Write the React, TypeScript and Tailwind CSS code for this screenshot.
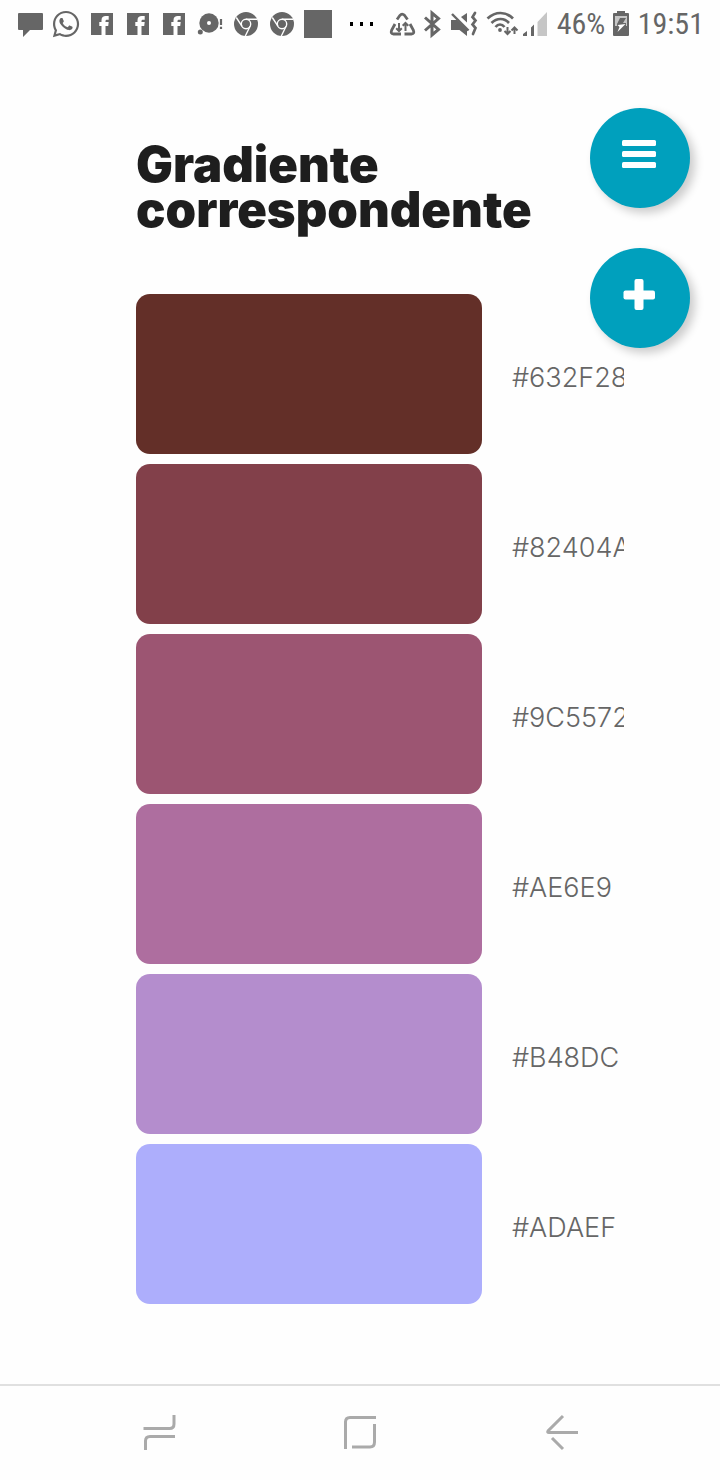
import type { ReactNode } from "react";
import { FaWhatsapp } from "react-icons/fa";

const swatches = [
  { code: "#632F28", color: "bg-[#632f28]" },
  { code: "#82404A", color: "bg-[#82404a]" },
  { code: "#9C5572", color: "bg-[#9c5572]" },
  { code: "#AE6E9", color: "bg-[#ae6e9f]" },
  { code: "#B48DC", color: "bg-[#b48dcd]" },
  { code: "#ADAEF", color: "bg-[#adaefc]" },
];

function Cell({ children }: { children: ReactNode }) {
  return (
    <svg viewBox="0 0 36 48" className="h-12 w-9 shrink-0" fill="currentColor" aria-hidden="true">
      {children}
    </svg>
  );
}

function Facebook() {
  return (
    <Cell>
      <path d="M7 13h22v22H7z" />
      <path
        fill="#fff"
        d="M17.5 35V26h-2.200v-4h2.200v-1.800c0-3 1.800-4.200 4.200-4.200h3v3.800h-1.600c-1.300 0-1.600.6-1.600 1.400v.8h3.200l-.5 4h-2.700v9z"
      />
    </Cell>
  );
}

function Chrome() {
  return (
    <Cell>
      <circle cx="18" cy="24" r="12" />
      <g fill="none" stroke="#fff" strokeWidth="1.4">
        <circle cx="18" cy="24" r="4.7" />
        <path d="M18 19.3H29M13.9 26.2 8.3 17.5M22.1 26.3 17.3 36" />
      </g>
    </Cell>
  );
}

function StatusBar() {
  return (
    <header className="flex h-12 items-center justify-between pl-3 pr-4 text-[#666]">
      <div className="flex items-center">
        <Cell>
          <path d="M7 13h23a1 1 0 0 1 1 1v15a1 1 0 0 1-1 1H18l-7 7v-7H7a1 1 0 0 1-1-1V14a1 1 0 0 1 1-1z" />
        </Cell>
        <span className="flex w-9 justify-center">
          <FaWhatsapp size={30} aria-hidden="true" />
        </span>
        <Facebook />
        <Facebook />
        <Facebook />
        <Cell>
          <circle cx="17" cy="23" r="9.7" />
          <circle cx="8.3" cy="32" r="2.5" />
          <circle cx="17" cy="23" r="2" fill="#fff" />
          <path d="M27.9 19h2.2v6h-2.2zM27.9 26.7h2.2v2.2h-2.2z" />
        </Cell>
        <Chrome />
        <Chrome />
        <Cell>
          <path d="M4 10h28v28H4z" />
        </Cell>
        <svg viewBox="0 0 48 48" className="h-12 w-12" fill="#000" aria-hidden="true">
          <path d="M14 22h3v4h-3zM24 22h3v4h-3zM34 22h3v4h-3z" />
        </svg>
      </div>
      <div className="flex items-center">
        <svg viewBox="386 0 166 48" className="h-12 w-[166px]" fill="none" stroke="currentColor" aria-hidden="true">
          <path d="m397 19.500 3-4.200q2-2.500 4.500 0l3 4.200M395 24l-3.300 6q-1.500 4 1.800 4h7.500M410 24l3.300 6q1.500 4-1.800 4h-7" strokeWidth="2.800" />
          <path d="M399 23v8m-2.800-2.800 2.800 2.800 2.800-2.800M405.500 31v-8m-2.800 2.800 2.800-2.800 2.800 2.800" strokeWidth="2" />
          <path d="m425 17.500 13.500 12-6.500 5.500V13l6.500 5.500L425 30.500" strokeWidth="3" />
          <path fill="currentColor" stroke="none" d="M451 20h6l10 9.500V36l-7.500-6H451zM461 17l6-4v9.500z" />
          <path d="m452 14 16.500 16.500" strokeWidth="2.400" />
          <path d="m475 13-2.500 4 3 3.500-3 4 3 3.500-2.500 6" strokeWidth="2.700" strokeLinecap="round" />
          <g strokeWidth="2.700">
            <path d="M487.500 18.500q6-5.500 13-5.500t12.500 5.500M491.500 23q4-4 9-4t8.500 4M495.500 27q2-2.500 4.500-2.500t4.500 2.500" />
          </g>
          <circle cx="500" cy="30" r="1.900" fill="currentColor" stroke="none" />
          <path d="M507.500 27v7m-3-3 3 3 3-3M514.500 34v-6.500m-3 3 3-3 3 3" strokeWidth="2" />
          <path fill="currentColor" stroke="none" d="M523 36v-2l4-3v5zM531 36V27.500l3-3V36z" />
          <path fill="#c6c6c6" stroke="none" d="M537.500 36V22l9.500-10v24z" />
        </svg>
        <span className="w-[58px] text-center font-['Roboto_Condensed','Liberation_Sans_Narrow',sans-serif] text-[30px] leading-[50px]">46%</span>
        <svg viewBox="0 0 24 48" className="h-12 w-6" fill="currentColor" aria-hidden="true">
          <path d="M3 13h4v-2h8v2h3a1 1 0 0 1 1 1v21a1 1 0 0 1-1 1H4a1 1 0 0 1-1-1V14a1 1 0 0 1 1-1z" />
          <path fill="#c6c6c6" d="M5 16h12v10H5z" />
          <path d="M10 18h6l-3 5h3v3H7v-2z" />
          <path fill="#fff" d="m7.500 25 8-1-8 8 2-5z" />
        </svg>
        <time className="w-[70px] text-right font-['Roboto_Condensed','Liberation_Sans_Narrow',sans-serif] text-[30px] leading-[50px]">19:51</time>
      </div>
    </header>
  );
}

function FloatingButton({ label, children }: { label: string; children: ReactNode }) {
  return (
    <button
      type="button"
      aria-label={label}
      className="flex size-[100px] justify-center rounded-full bg-[#00a0bd] pt-7 text-white shadow-[5px_5px_10px_rgba(0,0,0,0.2)]"
    >
      {children}
    </button>
  );
}

export default function App() {
  return (
    <div className="relative flex min-h-screen flex-col bg-[#fefefe] font-['Inter',sans-serif]">
      <StatusBar />

      <div className="absolute right-[30px] top-[108px] flex flex-col gap-10">
        <FloatingButton label="Menu">
          <svg viewBox="0 0 36 36" className="size-9" fill="currentColor" aria-hidden="true">
            <rect x="0" y="4" width="34" height="6" rx="1.500" />
            <rect x="0" y="15" width="34" height="6" rx="1.500" />
            <rect x="0" y="26" width="34" height="6" rx="1.500" />
          </svg>
        </FloatingButton>
        <FloatingButton label="Adicionar">
          <svg viewBox="0 0 36 36" className="size-9" fill="currentColor" aria-hidden="true">
            <rect x="1.500" y="14.500" width="31.500" height="9" rx="2" />
            <rect x="12.500" y="3" width="9" height="31" rx="2" />
          </svg>
        </FloatingButton>
      </div>

      <main className="flex-1 pb-20 pl-[136px] pr-24 pt-[94px]">
        <h1 className="text-[49px] font-black leading-[45px] text-[#1e1e1e]">Gradiente correspondente</h1>
        <ul className="mt-[62px] flex flex-col gap-[10px]">
          {swatches.map(({ code, color }) => (
            <li key={code} className="flex items-center gap-[30px]">
              <div className={`h-40 flex-1 rounded-[14px] ${color}`} />
              <input
                readOnly
                aria-label="Código da cor"
                value={code}
                className="mt-2 h-10 w-28 bg-transparent text-[27px] font-light text-[#666] outline-none"
              />
            </li>
          ))}
        </ul>
      </main>

      <nav className="flex h-24 items-center justify-center gap-[165px] border-t-2 border-[#e0e0e0] text-[#aaa]">
        <button type="button" aria-label="Recentes">
          <svg viewBox="0 0 36 36" className="size-9 overflow-visible" fill="none" stroke="currentColor" strokeWidth="3" aria-hidden="true">
            <path d="M2.500 13.500h26q4.500 0 4.500-4.500V0M34 21.500H9q-4.500 0-4.500 4.500v9" />
          </svg>
        </button>
        <button type="button" aria-label="Início">
          <svg viewBox="0 0 36 36" className="size-9" fill="none" stroke="currentColor" strokeWidth="3" aria-hidden="true">
            <path d="M3.500 34V7q0-4.500 4.500-4.500h26M32.500 9v18q0 5-4.500 5H10" />
          </svg>
        </button>
        <button type="button" aria-label="Voltar">
          <svg viewBox="0 0 36 36" className="size-9 overflow-visible" fill="none" stroke="currentColor" strokeWidth="3" aria-hidden="true">
            <path d="M20 1 5 16q-1 1.500 1 1.500h29M9 23l11 11" />
          </svg>
        </button>
      </nav>
    </div>
  );
}
